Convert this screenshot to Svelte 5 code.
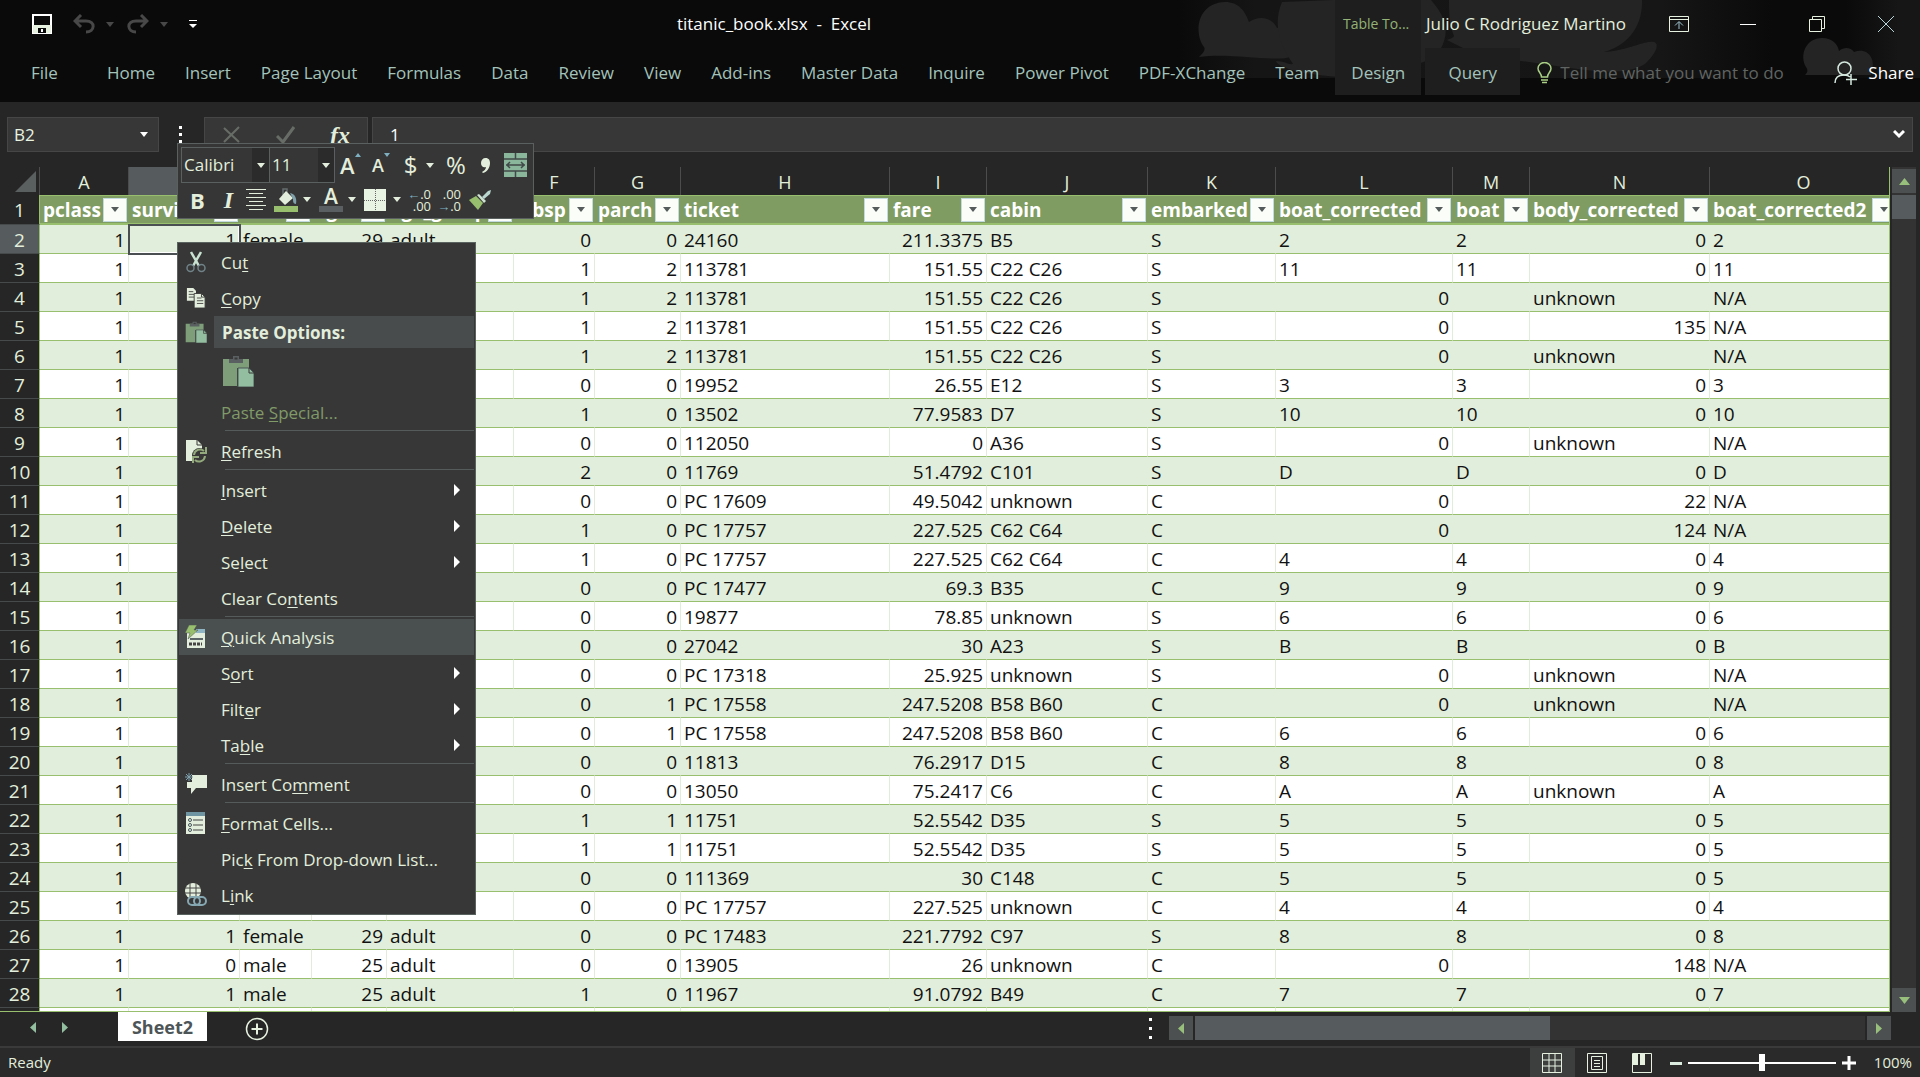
<script>
  const tabs = ['Home', 'Insert', 'Page Layout', 'Formulas', 'Data', 'Review', 'View', 'Add-ins', 'Master Data', 'Inquire', 'Power Pivot', 'PDF-XChange', 'Team'];

  const columns = [
    { id: 'A', title: 'pclass', w: 89 },
    { id: 'B', title: 'survived', w: 111 },
    { id: 'C', title: 'sex', w: 72 },
    { id: 'D', title: 'age', w: 75 },
    { id: 'E', title: 'age_group', w: 127 },
    { id: 'F', title: 'sibsp', w: 81 },
    { id: 'G', title: 'parch', w: 86 },
    { id: 'H', title: 'ticket', w: 209 },
    { id: 'I', title: 'fare', w: 97 },
    { id: 'J', title: 'cabin', w: 161 },
    { id: 'K', title: 'embarked', w: 128 },
    { id: 'L', title: 'boat_corrected', w: 177 },
    { id: 'M', title: 'boat', w: 77 },
    { id: 'N', title: 'body_corrected', w: 180 },
    { id: 'O', title: 'boat_corrected2', w: 188 }
  ];

  // sibsp | parch | ticket | fare | cabin | embarked | boat | body
  const source = `0|0|24160|211.3375|B5|S|2|0
1|2|113781|151.55|C22 C26|S|11|0
1|2|113781|151.55|C22 C26|S||unknown
1|2|113781|151.55|C22 C26|S||135
1|2|113781|151.55|C22 C26|S||unknown
0|0|19952|26.55|E12|S|3|0
1|0|13502|77.9583|D7|S|10|0
0|0|112050|0|A36|S||unknown
2|0|11769|51.4792|C101|S|D|0
0|0|PC 17609|49.5042|unknown|C||22
1|0|PC 17757|227.525|C62 C64|C||124
1|0|PC 17757|227.525|C62 C64|C|4|0
0|0|PC 17477|69.3|B35|C|9|0
0|0|19877|78.85|unknown|S|6|0
0|0|27042|30|A23|S|B|0
0|0|PC 17318|25.925|unknown|S||unknown
0|1|PC 17558|247.5208|B58 B60|C||unknown
0|1|PC 17558|247.5208|B58 B60|C|6|0
0|0|11813|76.2917|D15|C|8|0
0|0|13050|75.2417|C6|C|A|unknown
1|1|11751|52.5542|D35|S|5|0
1|1|11751|52.5542|D35|S|5|0
0|0|111369|30|C148|C|5|0
0|0|PC 17757|227.525|unknown|C|4|0
0|0|PC 17483|221.7792|C97|S|8|0
0|0|13905|26|unknown|C||148
1|0|11967|91.0792|B49|C|7|0`;

  const people = {
    2: ['1', 'female', '29', 'adult'],
    26: ['1', 'female', '29', 'adult'],
    27: ['0', 'male', '25', 'adult'],
    28: ['1', 'male', '25', 'adult']
  };
  const numeric = new Set([0, 1, 3, 5, 6, 8]);

  const rows = source.split('\n').map((line, i) => {
    const n = i + 2;
    const [sibsp, parch, ticket, fare, cabin, port, boat, body] = line.split('|');
    const values = ['1', ...(people[n] ?? ['', '', '', '']), sibsp, parch, ticket, fare, cabin, port,
      boat || '0', boat, body, boat || 'N/A'];
    const cells = values.map((text, c) => ({
      text,
      right: numeric.has(c) || (c === 11 && !boat) || (c === 13 && body !== 'unknown')
    }));
    return { n, cells };
  });

  const menu = [
    { icon: 'cut', t: ['Cu', 't', ''] },
    { icon: 'copy', t: ['', 'C', 'opy'] },
    { kind: 'paste' },
    { t: ['Paste ', 'S', 'pecial...'], off: true },
    { kind: 'sep' },
    { icon: 'refresh', t: ['', 'R', 'efresh'] },
    { kind: 'sep' },
    { t: ['', 'I', 'nsert'], sub: true },
    { t: ['', 'D', 'elete'], sub: true },
    { t: ['Se', 'l', 'ect'], sub: true },
    { t: ['Clear Co', 'n', 'tents'] },
    { kind: 'sep' },
    { icon: 'quick', t: ['', 'Q', 'uick Analysis'], hot: true },
    { t: ['S', 'o', 'rt'], sub: true },
    { t: ['Filt', 'e', 'r'], sub: true },
    { t: ['Ta', 'b', 'le'], sub: true },
    { kind: 'sep' },
    { icon: 'comment', t: ['Insert Co', 'm', 'ment'] },
    { kind: 'sep' },
    { icon: 'format', t: ['', 'F', 'ormat Cells...'] },
    { t: ['Pic', 'k', ' From Drop-down List...'] },
    { icon: 'link', t: ['L', 'i', 'nk'] }
  ];
</script>

{#snippet caret()}
  <svg class="caret" width="8" height="5" viewBox="0 0 8 5"><path d="M0 0h8L4 5z" fill="currentColor" /></svg>
{/snippet}

{#snippet clipboard(size)}
  <svg width={size} height={size} viewBox="0 0 32 32">
    <path d="M1 4h26v9H15v18H1z" fill="#7d9e78" />
    <path d="M7 4h4V1h6v3h4v4H7z" fill="#5a6062" />
    <rect x="12.500" y="2.500" width="3" height="2" fill="#383838" />
    <path d="M16 13h11l5 5v14H16z" fill="#93bfa0" stroke="#4c5557" />
    <path d="M27 13v5h5" fill="none" stroke="#383838" />
  </svg>
{/snippet}

{#snippet menuIcon(name)}
  {#if name === 'cut'}
    <svg width="20" height="22" viewBox="0 0 20 22" fill="none">
      <path d="M5 1l8 14M15 1L7 15" stroke="#c9e2d2" stroke-width="2.500" />
      <circle cx="4.500" cy="17" r="3.500" stroke="#6f8288" stroke-width="1.500" /><circle cx="15.500" cy="17" r="3.500" stroke="#6f8288" stroke-width="1.500" />
    </svg>
  {:else if name === 'copy'}
    <svg width="20" height="22" viewBox="0 0 22 24">
      <path d="M1 1h7l3 3v11H1z" fill="#e3efdc" /><path d="M3 5h5M3 8h6M3 11h6" stroke="#444" />
      <path d="M9 7h8l4 4v12H9z" fill="#e3efdc" stroke="#383838" /><path d="M12 12h5M12 15h7M12 18h7" stroke="#444" /><path d="M17 7v4h4" fill="none" stroke="#383838" />
    </svg>
  {:else if name === 'refresh'}
    <svg width="22" height="24" viewBox="0 0 22 24" fill="none">
      <path d="M1 1h11l5 5v16H1z" fill="#e3efdc" /><path d="M12 1v5h5" stroke="#383838" />
      <circle cx="14.500" cy="16.500" r="7.500" fill="#383838" /><path d="M9 16a6 6 0 0 1 10-4M20 17a6 6 0 0 1-10 4" stroke="#93ab7c" stroke-width="2" />
      <path d="M21 8v6h-6M8 24v-6h6" stroke="#93ab7c" stroke-width="2" />
    </svg>
  {:else if name === 'quick'}
    <svg width="22" height="24" viewBox="0 0 22 24">
      <path d="M2 5h18v18H2z" fill="#e3efdc" /><path d="M11 4h9v4h-9z" fill="#8fb4c4" />
      <path d="M5 14h13" stroke="#5c6568" stroke-width="2" /><path d="M4 19h13" stroke="#444" stroke-width="3" stroke-dasharray="3 1" />
      <path d="M4 0h8L9 5h4L3 14l2-6H0z" fill="#98bf6e" stroke="#4b5051" stroke-width=".5" />
    </svg>
  {:else if name === 'comment'}
    <svg width="24" height="24" viewBox="0 0 24 24">
      <path d="M8 3h15v13H12l-5 6v-6H3v-6h5z" fill="#e3efdc" /><path d="M5 1v8M1 5h8M2 2l6 6M8 2L2 8" stroke="#7fa2ac" />
    </svg>
  {:else if name === 'format'}
    <svg width="22" height="24" viewBox="0 0 22 24">
      <path d="M1 1h19v22H1z" fill="#e3efdc" /><path d="M1 1h19v4H1z" fill="#6f94a2" />
      <path d="M8 9h10M8 14h10M8 19h10" stroke="#444" /><g fill="none" stroke="#44555c"><circle cx="5" cy="9" r="1.500" /><circle cx="5" cy="14" r="1.500" /><circle cx="5" cy="19" r="1.500" /></g>
    </svg>
  {:else if name === 'link'}
    <svg width="24" height="24" viewBox="0 0 24 24" fill="none">
      <circle cx="9" cy="8" r="8" fill="#e3efdc" /><path d="M1 5h16M1 10h16M6 0v16M12 0v16" stroke="#444" />
      <rect x="4" y="14" width="12" height="8" rx="4" fill="#383838" stroke="#86a8b3" stroke-width="2" /><rect x="10" y="14" width="12" height="8" rx="4" stroke="#86a8b3" stroke-width="2" />
    </svg>
  {/if}
{/snippet}

<div class="app">
  <header class="top">
    <svg class="clouds" width="740" height="78" viewBox="0 0 740 78">
      <defs>
        <linearGradient id="haze"><stop offset="0" stop-color="#0a0a0a" /><stop offset=".1" stop-color="#151515" /><stop offset=".65" stop-color="#161616" /><stop offset=".8" stop-color="#0a0a0a" /><stop offset=".9" stop-color="#0a0a0a" /><stop offset=".97" stop-color="#161616" /></linearGradient>
      </defs>
      <path d="M0 0h740v78H0z" fill="url(#haze)" />
      <g fill="#242424">
        <path d="M19 57c4-4 7-7 5-10C14 34 16 3 45 2c14 0 20 9 24 20 12-8 24-3 28 6 12-3 21 8 14 18l10 4c-8 18-64 1-102 7z" />
        <path d="M153 0h98c10 12 22 28 9 50h27l-20-10c5-2 6-2 7-4-5-12-5-22-5-36h193c1 28-16 46-38 52 20-1 38-10 46-10 11-2 8 10-5 22-20 12-50 7-75 4l-90-13c-50-6-80 23-117 23-51-1-85-9-87-17 9 0 12 4 17 3-12-18-21-38-11-62z" />
        <path d="M625 75c3-3 3-5 1-8-7-12 0-29 16-29 11 0 16 7 17 13 6-5 12-3 15 1 14-5 23 7 17 23z" />
      </g>
    </svg>

    <div class="titlebar">
      <div class="quick">
        <button aria-label="Save"><svg width="20" height="20" viewBox="0 0 20 20"><path d="M1 1h18v18H1z" fill="none" stroke="#fff" stroke-width="2" /><path d="M1 11h18v8H1z" fill="#e6f1e0" /><path d="M6 14h8v5H6z" fill="#0a0a0a" /><path d="M9 15h2v3H9z" fill="#fff" /></svg></button>
        <button class="hist" aria-label="Undo"><svg width="22" height="20" viewBox="0 0 22 20" fill="none" stroke="#484848" stroke-width="3"><path d="M8 1L2 7l6 6M2 7h11c10 0 9 11 0 11" /></svg>{@render caret()}</button>
        <button class="hist redo" aria-label="Redo"><svg width="22" height="20" viewBox="0 0 22 20" fill="none" stroke="#484848" stroke-width="3"><path d="M14 1l6 6-6 6M20 7H9c-10 0-9 11 0 11" /></svg>{@render caret()}</button>
        <button aria-label="Customize Quick Access Toolbar"><svg width="8" height="9" viewBox="0 0 8 9" fill="#fff"><path d="M0 0h8v1H0zM0 4h8L4 8z" /></svg></button>
      </div>
      <h1>titanic_book.xlsx&nbsp; -&nbsp; Excel</h1>
      <div class="account">
        <span class="tools">Table To...</span>
        <span class="user">Julio C Rodriguez Martino</span>
      </div>
      <div class="window">
        <button aria-label="Ribbon Display Options"><svg width="20" height="16" viewBox="0 0 20 16" fill="none" stroke="#e6f1e0"><path d="M.5.5h19v15H.5zM.5 3.500h19" /><path d="M10 13V6M6 9.500l4-4 4 4" stroke="#9fc4d0" /></svg></button>
        <button aria-label="Minimize"><svg width="16" height="16" viewBox="0 0 16 16"><path d="M0 8.500h16" stroke="#fff" /></svg></button>
        <button aria-label="Restore"><svg width="16" height="16" viewBox="0 0 16 16" fill="none" stroke="#e6f1e0"><path d="M.5 3.500h12v12H.5zM3.500 3.500v-3h12v12h-3" /></svg></button>
        <button aria-label="Close"><svg width="16" height="16" viewBox="0 0 16 16"><path d="M0 0l16 16M16 0L0 16" stroke="#b8d4d8" /></svg></button>
      </div>
    </div>

    <nav class="ribbon">
      <button class="file">File</button>
      {#each tabs as tab}<button>{tab}</button>{/each}
      <button class="ctx design">Design</button>
      <button class="ctx query">Query</button>
      <label class="tell">
        <svg width="15" height="22" viewBox="0 0 15 22" fill="none" stroke="#a9cf84" stroke-width="1.500"><path d="M4.500 15c0-4-3.500-5-3.500-8.500a6.500 6 0 0 1 13 0c0 3.500-3.500 4.500-3.500 8.500zM4 18h7M5 20.500h5" /></svg>
        <input type="text" placeholder="Tell me what you want to do" />
      </label>
      <button class="share">
        <svg width="23" height="24" viewBox="0 0 23 24" fill="none" stroke="#d5e9e0" stroke-width="1.500"><circle cx="10.500" cy="7.500" r="6.500" /><path d="M1 22c0-6 4-8 9-8 3 0 5 1 6 2M17 13v11M12 18.500h11" /></svg>
        Share
      </button>
    </nav>
  </header>

  <div class="formula">
    <label class="namebox"><input type="text" value="B2" aria-label="Name Box" />{@render caret()}</label>
    <svg class="grip" width="4" height="20" viewBox="0 0 4 20" fill="#fff"><path d="M0 1h3v3H0zM0 8h3v3H0zM0 15h3v3H0z" /></svg>
    <div class="fxbox">
      <button aria-label="Cancel"><svg width="18" height="18" viewBox="0 0 18 18"><path d="M1 2l15 14M16 1L1 16" stroke="#676d66" stroke-width="2" /></svg></button>
      <button aria-label="Enter"><svg width="20" height="18" viewBox="0 0 20 18"><path d="M1 10l6 6L18 1" fill="none" stroke="#676d66" stroke-width="3" /></svg></button>
      <button class="fx" aria-label="Insert Function">fx</button>
    </div>
    <label class="bar"><input type="text" value="1" aria-label="Formula Bar" />
      <svg width="12" height="9" viewBox="0 0 12 9"><path d="M1 1l5 5 5-5" fill="none" stroke="#fff" stroke-width="3" /></svg>
    </label>
  </div>

  <main class="grid">
    <div class="sheet">
      <table>
        <colgroup><col class="gutter" />{#each columns as c}<col style:width="{c.w}px" />{/each}</colgroup>
        <thead>
          <tr class="letters">
            <th class="corner" aria-label="Select all"><svg width="21" height="21" viewBox="0 0 21 21"><path d="M21 0v21H0z" fill="#5a5f60" /></svg></th>
            {#each columns as c}<th class:on={c.id === 'B'}>{c.id}</th>{/each}
          </tr>
          <tr class="titles">
            <th class="num">1</th>
            {#each columns as c}
              <th><div class="title"><span>{c.title}</span><button aria-label="Filter {c.title}">{@render caret()}</button></div></th>
            {/each}
          </tr>
        </thead>
        <tbody>
          {#each rows as row}
            <tr>
              <th class="num" class:on={row.n === 2}>{row.n}</th>
              {#each row.cells as cell, c}
                <td class:right={cell.right} class:active={row.n === 2 && c === 1}>{cell.text}</td>
              {/each}
            </tr>
          {/each}
          <tr><th class="num"></th>{#each columns as c}<td></td>{/each}</tr>
        </tbody>
      </table>
    </div>
    <div class="vscroll">
      <button aria-label="Scroll up"><svg width="11" height="7" viewBox="0 0 11 7"><path d="M0 7h11L5.500 0z" fill="#98bf7c" /></svg></button>
      <div class="vthumb"></div>
      <button class="down" aria-label="Scroll down"><svg width="11" height="7" viewBox="0 0 11 7"><path d="M0 0h11L5.500 7z" fill="#98bf7c" /></svg></button>
    </div>
  </main>

  <div class="sheets">
    <div class="steps">
      <button aria-label="Previous sheet"><svg width="6" height="11" viewBox="0 0 6 11"><path d="M6 0v11L0 5.500z" fill="#93bfa0" /></svg></button>
      <button aria-label="Next sheet"><svg width="6" height="11" viewBox="0 0 6 11"><path d="M0 0v11l6-5.500z" fill="#93bfa0" /></svg></button>
    </div>
    <button class="tab">Sheet2</button>
    <button class="add" aria-label="New sheet"><svg width="24" height="24" viewBox="0 0 24 24" fill="none" stroke="#e6f1e0"><circle cx="12" cy="12" r="10.500" stroke-width="1.500" /><path d="M12 6.500v11M6.500 12h11" stroke-width="2" /></svg></button>
    <svg class="grip" width="4" height="24" viewBox="0 0 4 24" fill="#fff"><path d="M0 1h3v3H0zM0 10h3v3H0zM0 19h3v3H0z" /></svg>
    <div class="hscroll">
      <button aria-label="Scroll left"><svg width="6" height="11" viewBox="0 0 6 11"><path d="M6 0v11L0 5.500z" fill="#98bf7c" /></svg></button>
      <div class="htrack"><div class="hthumb"></div></div>
      <button aria-label="Scroll right"><svg width="6" height="11" viewBox="0 0 6 11"><path d="M0 0v11l6-5.500z" fill="#98bf7c" /></svg></button>
    </div>
  </div>

  <footer class="status">
    <span class="ready">Ready</span>
    <button class="view on" aria-label="Normal"><svg width="20" height="20" viewBox="0 0 20 20" fill="none" stroke="#e6f1e0"><path d="M.5.500h19v19H.5zM7 0v20M13 0v20M0 7h20M0 13h20" /></svg></button>
    <button class="view" aria-label="Page Layout"><svg width="20" height="20" viewBox="0 0 20 20" fill="none" stroke="#e6f1e0"><path d="M.5.500h19v19H.5zM4.500 3.500h11v13h-11zM7 7.500h6M7 10.500h6M7 13.500h6" /></svg></button>
    <button class="view" aria-label="Page Break Preview"><svg width="20" height="20" viewBox="0 0 20 20"><path d="M.5.500h19v19H.5z" fill="none" stroke="#e6f1e0" /><path d="M1 1h5v11H1zM8 1h5v11H8z" fill="#e6f1e0" /></svg></button>
    <div class="zoom">
      <button aria-label="Zoom out"><svg width="12" height="14" viewBox="0 0 12 14"><path d="M0 7.500h12" stroke="#dcebe0" stroke-width="3" /></svg></button>
      <input type="range" min="0" max="100" value="50" aria-label="Zoom" />
      <button aria-label="Zoom in"><svg width="14" height="14" viewBox="0 0 14 14"><path d="M0 7h14M7 0v14" stroke="#fff" stroke-width="3" /></svg></button>
    </div>
    <span class="pct">100%</span>
  </footer>

  <div class="mini">
    <div class="line">
      <div class="picks">
        <label class="pick"><select aria-label="Font"><option>Calibri</option></select>{@render caret()}</label>
        <label class="pick size"><select aria-label="Font size"><option>11</option></select>{@render caret()}</label>
      </div>
      <button class="grow" aria-label="Increase font size"><span class="big">A</span><svg width="6" height="4" viewBox="0 0 6 4"><path d="M0 4l3-4 3 4z" fill="#7fb0c2" /></svg></button>
      <button class="grow" aria-label="Decrease font size"><span>A</span><svg width="6" height="4" viewBox="0 0 6 4"><path d="M0 0l3 4 3-4z" fill="#7fb0c2" /></svg></button>
      <button class="sym money">${@render caret()}</button>
      <button class="sym">%</button>
      <button class="comma" aria-label="Comma style"><svg width="9" height="15" viewBox="0 0 9 15"><path d="M4.500 0C8 0 9 2.500 9 5c0 5-3 9-7 10l-1-1c2-1 4-3 4-5C2 10 0 8 0 5c0-3 2-5 4.500-5z" fill="#e3efdc" /></svg></button>
      <button aria-label="Merge"><svg width="23" height="24" viewBox="0 0 23 24"><path d="M0 0h23v24H0z" fill="#8ab69b" /><path d="M0 6h23M0 18h23M11.500 0v6M11.500 18v6M2 12h19M6 9l-3 3 3 3M17 9l3 3-3 3" fill="none" stroke="#414a49" stroke-width="1.500" /></svg></button>
    </div>
    <div class="line two">
      <button class="b">B</button>
      <button class="i">I</button>
      <button aria-label="Center"><svg width="20" height="22" viewBox="0 0 20 22"><path d="M0 .5h20M3 4.500h14M0 8.500h20M3 12.500h14M0 16.500h20M3 20.500h14" stroke="#e3efdc" /></svg></button>
      <button class="drop" aria-label="Fill color"><svg width="24" height="24" viewBox="0 0 24 24"><path d="M9 7V1h4v8" fill="none" stroke="#666d6e" stroke-width="1.500" /><path d="M12 3l7 7-8 7-6-6z" fill="#e3efdc" /><path d="M16 5c5 1 7 5 6 11-3 0-3-3-3-5z" fill="#7fa2ac" /><path d="M0 18h24v6H0z" fill="#98bf6e" /></svg>{@render caret()}</button>
      <button class="drop" aria-label="Font color"><span class="ink">A</span>{@render caret()}</button>
      <button class="drop edges" aria-label="Borders"><svg width="22" height="22" viewBox="0 0 22 22"><path d="M0 0h22v22H0z" fill="#e9f3e3" /><path d="M11.500 0v22M0 11.500h22" stroke="#666" stroke-dasharray="1 1" /></svg>{@render caret()}</button>
      <button class="dec" aria-label="Increase decimal"><span><i>←</i>.0</span><span>.00</span></button>
      <button class="dec" aria-label="Decrease decimal"><span>.00</span><span><i>→</i>.0</span></button>
      <button class="brush" aria-label="Format painter"><svg width="22" height="21" viewBox="0 0 22 21"><path d="M0 11l7-4 7 7-5 7z" fill="#98bf6e" /><path d="M8 6l2-1 7 7-2 2z" fill="#cfe3d3" /><path d="M13 8l6-6 3-1-1 4-6 5z" fill="#b9d6cf" /></svg></button>
    </div>
  </div>

  <div class="menu" role="menu">
    {#each menu as m}
      {#if m.kind === 'sep'}
        <div class="sep"></div>
      {:else if m.kind === 'paste'}
        <div class="pastehead"><span class="ico">{@render clipboard(22)}</span><strong>Paste Options:</strong></div>
        <div class="pasterow"><button aria-label="Paste">{@render clipboard(32)}</button></div>
      {:else}
        <button class="item" class:off={m.off} class:hot={m.hot} role="menuitem">
          <span class="ico">{@render menuIcon(m.icon)}</span>
          <span class="label">{m.t[0]}<u>{m.t[1]}</u>{m.t[2]}</span>
          {#if m.sub}<svg class="sub" width="6" height="12" viewBox="0 0 6 12"><path d="M0 0v12l6-6z" fill="#fff" /></svg>{/if}
        </button>
      {/if}
    {/each}
  </div>
</div>

<style>
  :global(body) { margin: 0; background: #262626; }
  .app {
    position: relative;
    display: flex;
    flex-direction: column;
    height: 100vh;
    overflow: hidden;
    background: #262626;
    color: #e3efdc;
    font: 17px/24px "Open Sans", "Noto Sans", sans-serif;
  }
  .app *, .app *::before { box-sizing: border-box; }
  button, input, select { margin: 0; padding: 0; border: 0; background: none; color: inherit; font: inherit; outline: 0; }
  button { display: flex; align-items: center; justify-content: center; white-space: nowrap; }
  svg { display: block; flex: none; }

  .top { position: relative; height: 102px; flex: none; background: #0a0a0a; }
  .clouds { position: absolute; top: 0; right: 0; }
  .titlebar { position: relative; display: flex; align-items: center; height: 48px; }
  .quick { display: flex; align-items: center; gap: 21px; width: 213px; padding-left: 32px; }
  .hist { gap: 11px; color: #484848; }
  .redo { margin-left: -8px; }
  h1 { flex: 1; margin: 0; text-align: center; font-size: 17px; font-weight: 400; color: #fff; }
  .account { display: flex; align-items: center; height: 48px; }
  .tools { display: flex; align-items: center; height: 48px; width: 86px; padding-left: 8px; background: #1e1e1e; color: #93b377; font-size: 14px; white-space: nowrap; }
  .user { padding-left: 5px; width: 223px; white-space: nowrap; }
  .window { display: flex; align-items: center; width: 276px; }
  .window button { width: 69px; height: 48px; }
  .ribbon { position: relative; display: flex; height: 54px; color: #a3c3bb; }
  .ribbon > button { height: 50px; padding: 0 15px; }
  .ribbon > .file { padding: 0 34px 0 31px; }
  .ribbon > .ctx { height: 47px; padding-top: 2px; background: #1e1e1e; }
  .ribbon > .design { width: 86px; margin-left: 1px; margin-right: 4px; }
  .ribbon > .query { width: 95px; }
  .tell { display: flex; align-items: center; gap: 8px; height: 50px; flex: 1; padding-left: 17px; }
  .tell input { flex: 1; min-width: 0; }
  .tell input::placeholder { color: #606462; opacity: 1; }
  .ribbon > .share { gap: 11px; padding: 0 6px 0 0; color: #fff; }

  .formula { display: flex; flex: none; align-items: center; height: 65px; padding: 0 7px 0 7px; }
  .namebox, .fxbox, .bar { display: flex; align-items: center; height: 35px; background: #373737; border: 1px solid #464646; }
  .namebox { width: 152px; padding: 0 10px 0 6px; color: #fff; }
  .namebox input { flex: 1; min-width: 0; color: #e8f3e2; }
  .grip { margin: 0 21px 0 20px; }
  .fxbox { width: 164px; margin-right: 4px; }
  .fxbox button { width: 54px; }
  .fxbox .fx { font: italic 700 24px/24px "Liberation Serif", serif; }
  .bar { flex: 1; padding: 0 7px 0 17px; }
  .bar input { flex: 1; color: #fff; }

  .grid { display: flex; flex: 1; min-height: 0; }
  .sheet { flex: 1; min-width: 0; overflow: hidden; border-right: 1px solid #98bf6e; border-bottom: 1px solid #98bf6e; background: #fff; }
  table { width: 1898px; table-layout: fixed; border-collapse: separate; border-spacing: 0; font-size: 19px; line-height: 26px; }
  .gutter { width: 40px; }
  th, td { padding: 1px 3px 0; overflow: hidden; white-space: nowrap; text-align: left; height: 29px; }
  .letters th { height: 28px; padding-top: 2px; background: #262626; border-right: 1px solid #4c4c4c; font-weight: 400; text-align: center; font-size: 18px; }
  .letters .on, tbody .num.on { background: #565c5e; }
  .letters .corner { padding: 4px 3px 3px 15px; }
  .num { background: #262626; border-right: 1px solid #98bf6e; border-bottom: 1px solid #464a4a; font-weight: 400; text-align: center; padding: 1px 0 0; }
  .titles th:not(.num) { height: 30px; padding: 0 2px 0 3px; background: #7f9c63; color: #fff; border-top: 1px solid #98bf6e; border-bottom: 2px solid #98bf6e; }
  .title { display: flex; align-items: center; justify-content: space-between; }
  .title span { flex: 1; min-width: 0; padding-top: 1px; overflow: hidden; }
  .title button { flex: none; width: 24px; height: 24px; background: #fafdf8; border: 1px solid #c3dbe0; color: #555b5b; }
  td { color: #111; background: #fff; border-bottom: 1px solid #98bf6e; border-right: 1px solid #e0eddb; }
  tbody tr:nth-child(odd) td { background: #e1eedb; border-right-color: #e1eedb; }
  .right { text-align: right; }
  tbody tr td.active { position: relative; box-shadow: inset 0 0 0 1px #fff; outline: 2px solid #4a4f51; outline-offset: -1px; }

  .vscroll { display: flex; flex-direction: column; gap: 2px; width: 30px; padding: 2px 4px 0 2px; background: linear-gradient(90deg, #262626 2px, #333 2px 26px, #262626 26px); }
  .vscroll button { height: 24px; background: #4c5051; }
  .vthumb { height: 24px; background: #565c5e; }
  .vscroll .down { margin-top: auto; }

  .sheets { display: flex; flex: none; height: 34px; }
  .steps { display: flex; gap: 26px; padding: 0 50px 4px 30px; }
  .tab { height: 29px; width: 89px; background: #fff; color: #4d5557; font-size: 18px; font-weight: 700; }
  .add { height: 34px; margin-left: 38px; margin-right: auto; }
  .sheets .grip { margin: 5px 16px 0 0; }
  .hscroll { display: flex; gap: 2px; flex: 0 1 722px; height: 24px; margin: 4px 29px 0 0; }
  .hscroll button { width: 24px; background: #4c5051; }
  .htrack { flex: 1; background: #333; }
  .hthumb { width: 53%; height: 24px; background: #565c5e; }

  .status { display: flex; flex: none; align-items: center; height: 31px; border-top: 2px solid #3a3a3a; background: #2a2a2a; font-size: 15px; line-height: 22px; padding: 0 8px; }
  .ready, .pct { padding-bottom: 2px; }
  .ready { margin-right: auto; }
  .view { width: 45px; height: 29px; }
  .view.on { background: #3d3f3f; }
  .zoom { display: flex; align-items: center; gap: 6px; margin: 0 18px 0 5px; }
  .zoom input { width: 148px; height: 18px; appearance: none; background: linear-gradient(#fff, #fff) center / 100% 2px no-repeat; }
  .zoom input::-webkit-slider-thumb { appearance: none; width: 6px; height: 17px; background: #fff; }

  .mini { position: absolute; left: 177px; top: 143px; width: 357px; height: 76px; padding: 3px; background: #363636; border: 1px solid #5a5f60; }
  .line { display: flex; align-items: center; height: 36px; gap: 12px; }
  .picks { display: flex; margin-right: -7px; }
  .pick { position: relative; display: flex; align-items: center; width: 89px; height: 36px; border: 1px solid #5a5f60; background: linear-gradient(90deg, transparent 70px, #2b2b2b 70px); }
  .pick select { appearance: none; width: 100%; height: 34px; padding-left: 2px; }
  .pick.size { width: 66px; margin-left: -1px; background: linear-gradient(90deg, transparent 48px, #2b2b2b 48px); }
  .pick .caret { position: absolute; right: 4px; pointer-events: none; }
  .grow { align-items: flex-start; justify-content: flex-start; width: 20px; font-size: 18px; font-weight: 600; }
  .grow .big { font-size: 22px; }
  .sym { width: 20px; font-size: 24px; }
  .money { width: 30px; gap: 9px; }
  .comma { width: 14px; }
  .line.two { height: 33px; gap: 8px; padding-left: 9px; }
  .b { width: 21px; justify-content: flex-start; font-size: 22px; font-weight: 700; }
  .i { width: 19px; font: italic 700 24px/24px "Liberation Serif", serif; }
  .drop { width: 37px; gap: 5px; justify-content: flex-start; }
  .edges { gap: 7px; }
  .ink { width: 24px; height: 24px; border-bottom: 6px solid #5a6062; font-size: 21px; line-height: 16px; font-weight: 600; }
  .dec { width: 22px; flex-direction: column; align-items: flex-end; font-size: 13px; line-height: 12px; }
  .dec span { display: flex; }
  .dec i { font-style: normal; color: #7fb0c2; }

  .menu { position: absolute; left: 177px; top: 242px; width: 299px; padding: 1px; background: #373737; border: 1px solid #5a6260; }
  .item { width: 100%; height: 36px; justify-content: flex-start; }
  .ico { display: flex; justify-content: center; width: 33px; flex: none; }
  .label { flex: 1; padding: 2px 0 0 9px; text-align: left; }
  u { text-underline-offset: 2px; text-decoration-thickness: 1px; }
  .off { color: #809a68; }
  .hot { background: #4a4f50; }
  .sub { margin-right: 14px; }
  .sep { height: 3px; margin-left: 46px; border-top: 1px solid #555a5a; }
  .pastehead { display: flex; align-items: center; height: 32px; background: linear-gradient(90deg, transparent 35px, #484c4d 35px); }
  .pastehead strong { padding: 2px 0 0 10px; }
  .pasterow { height: 46px; padding: 7px 0 0 43px; }
</style>
